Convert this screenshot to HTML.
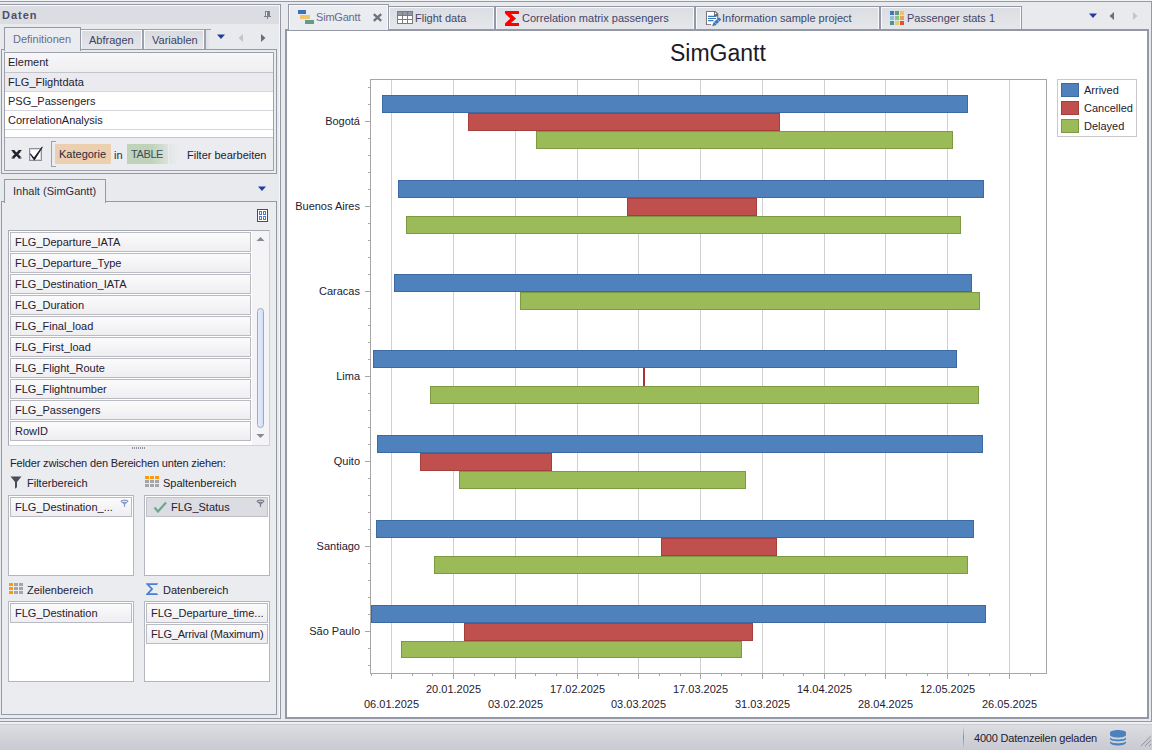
<!DOCTYPE html>
<html><head><meta charset="utf-8">
<style>
*{box-sizing:border-box;margin:0;padding:0}
html,body{width:1152px;height:750px;overflow:hidden}
body{position:relative;background:#e9eaee;font-family:"Liberation Sans",sans-serif;font-size:11px;color:#1f2030}
.a{position:absolute}
.t{position:absolute;white-space:nowrap;line-height:13px;height:13px}
.fi{position:absolute;height:20px;border:1px solid #b9bac2;background:linear-gradient(#fbfbfc,#eeeef1);}
.fi span{position:absolute;left:4px;top:3px;white-space:nowrap;line-height:13px}
.box{position:absolute;background:#fff;border:1px solid #b4b6be}
</style></head><body>
<!-- top line -->
<div class="a" style="left:0;top:0;width:1152px;height:1px;background:#f1f2f5"></div>
<div class="a" style="left:0;top:1px;width:1152px;height:1px;background:#9799a6"></div>
<!-- LEFT PANEL frame -->
<div class="a" style="left:0;top:4px;width:281px;height:715px;border-top:1px solid #9599a5;border-right:1px solid #9599a5;border-bottom:1px solid #9599a5"></div>
<div class="a" style="left:0;top:5px;width:280px;height:1px;background:#f7f8fa"></div>
<div class="a" style="left:279px;top:5px;width:1px;height:713px;background:#f7f8fa"></div>
<!-- header -->
<div class="a" style="left:0;top:6px;width:279px;height:18px;background:#dcdde2"></div>
<div class="t" style="left:2px;top:9px;font-weight:bold;font-size:11px;color:#4b5068;letter-spacing:1px">Daten</div>
<!-- pin -->
<div class="a" style="left:265px;top:11px;width:5px;height:5px;background:#7c7f8c"></div>
<div class="a" style="left:266px;top:12px;width:1px;height:4px;background:#eceef2"></div>
<div class="a" style="left:264px;top:16px;width:7px;height:1px;background:#7c7f8c"></div>
<div class="a" style="left:267px;top:17px;width:1px;height:2px;background:#7c7f8c"></div>
<!-- tabs row 1 -->
<div class="a" style="left:80px;top:29px;width:63px;height:21px;border:1px solid #9ea1ab;border-bottom:none;box-shadow:inset 1px 1px 0 #f8f9fb,inset -1px 0 0 #f8f9fb;background:linear-gradient(#d9dadf,#e6e7eb)"></div>
<div class="t" style="left:89px;top:34px;color:#3a4466">Abfragen</div>
<div class="a" style="left:143px;top:29px;width:62px;height:21px;border:1px solid #9ea1ab;border-bottom:none;box-shadow:inset 1px 1px 0 #f8f9fb,inset -1px 0 0 #f8f9fb;background:linear-gradient(#d9dadf,#e6e7eb)"></div>
<div class="t" style="left:152px;top:34px;color:#3a4466">Variablen</div>
<div class="a" style="left:205px;top:29px;width:6px;height:21px;border-left:1px solid #9ea1ab;border-top:1px solid #9ea1ab;background:linear-gradient(90deg,#dfe0e5,#e9eaee)"></div>
<!-- tab page 1 -->
<div class="a" style="left:1px;top:49px;width:276px;height:125px;border:1px solid #9599a5;background:#ebecf0"></div>
<!-- active tab Definitionen -->
<div class="a" style="left:4px;top:27px;width:77px;height:24px;border:1px solid #9599a5;border-bottom:none;background:#ebecf0"></div>
<div class="t" style="left:13px;top:33px;color:#6a6c88">Definitionen</div>
<!-- arrows -->
<svg class="a" style="left:216px;top:34px" width="10" height="6" viewBox="0 0 10 6"><path d="M1 0.5h8L5 5z" fill="#1f3d9e"/></svg>
<svg class="a" style="left:237px;top:33px" width="7" height="10" viewBox="0 0 7 10"><path d="M6 1v8L1.5 5z" fill="#c3c5cc"/></svg>
<svg class="a" style="left:260px;top:33px" width="7" height="10" viewBox="0 0 7 10"><path d="M1 1v8L5.5 5z" fill="#6b6e7a"/></svg>

<!-- grid -->
<div class="a" style="left:4px;top:52px;width:270px;height:119px;border:1px solid #9ea1ab;background:#fff"></div>
<div class="a" style="left:5px;top:53px;width:268px;height:19px;background:linear-gradient(#f7f7f9,#efeff2)"></div>
<div class="a" style="left:5px;top:72px;width:268px;height:1px;background:#c4c5cc"></div>
<div class="a" style="left:5px;top:73px;width:268px;height:18px;background:#ebebef"></div>
<div class="a" style="left:5px;top:91px;width:268px;height:1px;background:#d6d7dc"></div>
<div class="a" style="left:5px;top:110px;width:268px;height:1px;background:#d6d7dc"></div>
<div class="a" style="left:5px;top:129px;width:268px;height:1px;background:#d6d7dc"></div>
<div class="a" style="left:5px;top:137px;width:268px;height:1px;background:#c4c5cc"></div>
<div class="a" style="left:5px;top:138px;width:268px;height:32px;background:#ebecf0"></div>
<div class="t" style="left:8px;top:56px;color:#1f2030">Element</div>
<div class="t" style="left:8px;top:76px;color:#1f2030">FLG_Flightdata</div>
<div class="t" style="left:8px;top:95px;color:#1f2030">PSG_Passengers</div>
<div class="t" style="left:8px;top:114px;color:#1f2030">CorrelationAnalysis</div>
<!-- filter bar -->
<svg class="a" style="left:11px;top:150px" width="11" height="9" viewBox="0 0 11 9"><path d="M2 0.8L9 7.6M9 0.8L2 7.6" stroke="#1f2030" stroke-width="2.5"/><path d="M0.5 0.5h3M7.5 0.5h3M0.5 8h3M7.5 8h3" stroke="#1f2030" stroke-width="1"/></svg>
<div class="a" style="left:29px;top:148px;width:13px;height:13px;border:1px solid #8e919c;background:#fff;box-shadow:inset 0 0 0 1px #d9dae1"></div>
<svg class="a" style="left:28px;top:144px" width="16" height="18" viewBox="0 0 16 18"><path d="M2.5 10.2L6.3 15.8L14.2 3.2L6 14.3z" fill="#1f2030" stroke="#1f2030" stroke-width="1.1" stroke-linejoin="round"/></svg>
<div class="a" style="left:51px;top:141px;width:5px;height:26px;border:1px solid #9ea1ab;border-right:none"></div>
<div class="a" style="left:55px;top:144px;width:56px;height:20px;background:#ebcfae;border-radius:1px"></div>
<div class="t" style="left:59px;top:148px;color:#2a2a44">Kategorie</div>
<div class="t" style="left:114px;top:149px;color:#2a2a44">in</div>
<div class="a" style="left:127px;top:144px;width:41px;height:20px;background:linear-gradient(90deg,#bfd3bb 60%,#dbe3da)"></div>
<div class="t" style="left:131px;top:148px;color:#3f4d5e;letter-spacing:-0.4px">TABLE</div>
<div class="a" style="left:169px;top:144px;width:9px;height:20px;background:linear-gradient(90deg,#e3e6e6,#eaebee)"></div>
<div class="t" style="left:187px;top:149px;color:#1f2030">Filter bearbeiten</div>

<!-- tab 2 Inhalt -->
<div class="a" style="left:1px;top:201px;width:276px;height:514px;border:1px solid #9599a5;background:#ebecf0"></div>
<div class="a" style="left:4px;top:179px;width:102px;height:24px;border:1px solid #9599a5;border-bottom:none;background:#ebecf0"></div>
<div class="t" style="left:13px;top:185px;color:#2a2c44">Inhalt (SimGantt)</div>
<svg class="a" style="left:257px;top:186px" width="10" height="6" viewBox="0 0 10 6"><path d="M1 0.5h8L5 5z" fill="#1f3d9e"/></svg>
<!-- grid icon -->
<div class="a" style="left:257px;top:209px;width:11px;height:13px;border:1px solid #4a4d58;background:#fff"></div>
<div class="a" style="left:259px;top:211px;width:3px;height:4px;border:1px solid #4a7ed6"></div>
<div class="a" style="left:263px;top:211px;width:3px;height:4px;border:1px solid #4a7ed6"></div>
<div class="a" style="left:259px;top:216px;width:3px;height:4px;border:1px solid #4a7ed6"></div>
<div class="a" style="left:263px;top:216px;width:3px;height:4px;border:1px solid #4a7ed6"></div>
<!-- field list -->
<div class="a" style="left:8px;top:230px;width:262px;height:216px;border:1px solid #a9abb4;border-bottom-color:#d0d1d6;border-right-color:#d0d1d6;background:#f4f4f6"></div>
<div class="a" style="left:9px;top:231px;width:243px;height:214px;background:#fff"></div>
<div class="fi" style="left:10px;top:232px;width:241px"><span>FLG_Departure_IATA</span></div>
<div class="fi" style="left:10px;top:253px;width:241px"><span>FLG_Departure_Type</span></div>
<div class="fi" style="left:10px;top:274px;width:241px"><span>FLG_Destination_IATA</span></div>
<div class="fi" style="left:10px;top:295px;width:241px"><span>FLG_Duration</span></div>
<div class="fi" style="left:10px;top:316px;width:241px"><span>FLG_Final_load</span></div>
<div class="fi" style="left:10px;top:337px;width:241px"><span>FLG_First_load</span></div>
<div class="fi" style="left:10px;top:358px;width:241px"><span>FLG_Flight_Route</span></div>
<div class="fi" style="left:10px;top:379px;width:241px"><span>FLG_Flightnumber</span></div>
<div class="fi" style="left:10px;top:400px;width:241px"><span>FLG_Passengers</span></div>
<div class="fi" style="left:10px;top:421px;width:241px"><span>RowID</span></div>
<!-- scrollbar -->
<svg class="a" style="left:256px;top:236px" width="9" height="6" viewBox="0 0 9 6"><path d="M0.5 5h8L4.5 1z" fill="#868995"/></svg>
<div class="a" style="left:257px;top:308px;width:7px;height:120px;border:1px solid #a6a9b4;border-radius:4px;background:linear-gradient(90deg,#e6ecfb,#d3def8)"></div>
<svg class="a" style="left:256px;top:433px" width="9" height="6" viewBox="0 0 9 6"><path d="M0.5 1h8L4.5 5z" fill="#868995"/></svg>
<!-- splitter dots -->
<div class="a" style="left:132px;top:447px;width:14px;height:2px;background:repeating-linear-gradient(90deg,#8e919c 0 1px,transparent 1px 2px)"></div>
<div class="t" style="left:10px;top:457px;color:#1f2030;letter-spacing:-0.16px">Felder zwischen den Bereichen unten ziehen:</div>
<!-- Filterbereich -->
<svg class="a" style="left:10px;top:476px" width="12" height="13" viewBox="0 0 12 13"><path d="M0.5 0.5h11L7 6v5.2L5 12.8V6z" fill="#4a4d58"/></svg>
<div class="t" style="left:27px;top:477px;color:#1f2030">Filterbereich</div>
<div class="box" style="left:8px;top:495px;width:126px;height:81px"></div>
<div class="fi" style="left:10px;top:497px;width:122px"><span>FLG_Destination_...</span></div>
<svg class="a" style="left:120px;top:499px" width="9" height="10" viewBox="0 0 9 10"><ellipse cx="4.5" cy="2.2" rx="3.3" ry="1.1" fill="none" stroke="#8a9ccb" stroke-width="1.1"/><path d="M1.5 3L7.5 3L5.1 5.6H3.9z" fill="#8a9ccb"/><rect x="3.9" y="5" width="1.2" height="3" fill="#8a9ccb"/></svg>
<!-- Spaltenbereich -->
<svg class="a" style="left:145px;top:476px" width="15" height="12" viewBox="0 0 15 12">
<rect x="0" y="0" width="4" height="3" fill="#fd9a0c"/><rect x="5" y="0" width="4" height="3" fill="#fd9a0c"/><rect x="10" y="0" width="4" height="3" fill="#fd9a0c"/>
<rect x="0" y="4" width="4" height="3" fill="#a5a5a7"/><rect x="5" y="4" width="4" height="3" fill="#a5a5a7"/><rect x="10" y="4" width="4" height="3" fill="#a5a5a7"/>
<rect x="0" y="8" width="4" height="3" fill="#a5a5a7"/><rect x="5" y="8" width="4" height="3" fill="#a5a5a7"/><rect x="10" y="8" width="4" height="3" fill="#a5a5a7"/></svg>
<div class="t" style="left:163px;top:477px;color:#1f2030">Spaltenbereich</div>
<div class="box" style="left:144px;top:495px;width:126px;height:81px"></div>
<div class="fi" style="left:146px;top:497px;width:122px;background:#dcdde2;border-color:#c0c1c8"><span style="left:24px">FLG_Status</span></div>
<svg class="a" style="left:153px;top:501px" width="15" height="12" viewBox="0 0 15 12"><path d="M1.5 6.5l3.5 4l8-9" fill="none" stroke="#68a891" stroke-width="2.2"/></svg>
<svg class="a" style="left:256px;top:499px" width="9" height="10" viewBox="0 0 9 10"><ellipse cx="4.5" cy="2.2" rx="3.3" ry="1.1" fill="none" stroke="#7d808a" stroke-width="1.1"/><path d="M1.5 3L7.5 3L5.1 5.6H3.9z" fill="#7d808a"/><rect x="3.9" y="5" width="1.2" height="3" fill="#7d808a"/></svg>
<!-- Zeilenbereich -->
<svg class="a" style="left:9px;top:583px" width="15" height="12" viewBox="0 0 15 12">
<rect x="0" y="0" width="4" height="3" fill="#fd9a0c"/><rect x="5" y="0" width="4" height="3" fill="#a5a5a7"/><rect x="10" y="0" width="4" height="3" fill="#a5a5a7"/>
<rect x="0" y="4" width="4" height="3" fill="#fd9a0c"/><rect x="5" y="4" width="4" height="3" fill="#a5a5a7"/><rect x="10" y="4" width="4" height="3" fill="#a5a5a7"/>
<rect x="0" y="8" width="4" height="3" fill="#fd9a0c"/><rect x="5" y="8" width="4" height="3" fill="#a5a5a7"/><rect x="10" y="8" width="4" height="3" fill="#a5a5a7"/></svg>
<div class="t" style="left:27px;top:584px;color:#1f2030">Zeilenbereich</div>
<div class="box" style="left:8px;top:601px;width:126px;height:81px"></div>
<div class="fi" style="left:10px;top:603px;width:122px"><span>FLG_Destination</span></div>
<!-- Datenbereich -->
<svg class="a" style="left:146px;top:583px" width="13" height="13" viewBox="0 0 13 13"><path d="M0 0.2H12.3L10.9 1.9H3.4L7.2 6.1L3.4 10.3H10.9L12.3 12H0V11.2L4.9 6.1L0 1z" fill="#4a7fd4"/></svg>
<div class="t" style="left:163px;top:584px;color:#1f2030">Datenbereich</div>
<div class="box" style="left:144px;top:601px;width:126px;height:81px"></div>
<div class="fi" style="left:146px;top:603px;width:122px"><span>FLG_Departure_time...</span></div>
<div class="fi" style="left:146px;top:624px;width:122px"><span style="letter-spacing:-0.2px">FLG_Arrival (Maximum)</span></div>
<!-- DOC TABS -->
<div class="a" style="left:388px;top:6px;width:107px;height:24px;box-shadow:inset 1px 1px 0 #f8f9fb,inset -1px 0 0 #f8f9fb;border:1px solid #9599a5;border-bottom:none;background:linear-gradient(#dcdde2,#e6e7eb)"></div>
<div class="a" style="left:495px;top:6px;width:200px;height:24px;box-shadow:inset 1px 1px 0 #f8f9fb,inset -1px 0 0 #f8f9fb;border:1px solid #9599a5;border-bottom:none;background:linear-gradient(#dcdde2,#e6e7eb)"></div>
<div class="a" style="left:695px;top:6px;width:185px;height:24px;box-shadow:inset 1px 1px 0 #f8f9fb,inset -1px 0 0 #f8f9fb;border:1px solid #9599a5;border-bottom:none;background:linear-gradient(#dcdde2,#e6e7eb)"></div>
<div class="a" style="left:880px;top:6px;width:142px;height:24px;box-shadow:inset 1px 1px 0 #f8f9fb,inset -1px 0 0 #f8f9fb;border:1px solid #9599a5;border-bottom:none;background:linear-gradient(#dcdde2,#e6e7eb)"></div>
<!-- frame -->
<div class="a" style="left:285px;top:29px;width:864px;height:690px;border:2px solid #9599a5;background:#fff"></div>
<!-- active tab -->
<div class="a" style="left:288px;top:4px;width:101px;height:26px;border:1px solid #9599a5;border-bottom:none;background:#ebecf0;box-shadow:inset 1px 1px 0 #f8f9fb,inset -1px 0 0 #f8f9fb;"></div>
<div class="a" style="left:289px;top:29px;width:99px;height:1px;background:#ebecf0"></div>
<!-- gantt icon -->
<div class="a" style="left:298px;top:10px;width:8px;height:4px;background:#3a74b8"></div>
<div class="a" style="left:300px;top:15px;width:10px;height:4px;background:#f0c46e"></div>
<div class="a" style="left:305px;top:20px;width:9px;height:4px;background:#5e9e88"></div>
<div class="t" style="left:316px;top:11px;color:#646a8a;letter-spacing:-0.2px">SimGantt</div>
<svg class="a" style="left:372px;top:13px" width="11" height="9" viewBox="0 0 11 9"><path d="M1.8 1.2l7.4 6.6M9.2 1.2l-7.4 6.6" stroke="#6e717c" stroke-width="2.3"/></svg>
<!-- flight data icon -->
<div class="a" style="left:397px;top:11px;width:16px;height:13px;background:#7b7b7b"></div>
<div class="a" style="left:398px;top:12px;width:4px;height:3px;background:#8f9aa8"></div>
<div class="a" style="left:403px;top:12px;width:4px;height:3px;background:#8f9aa8"></div>
<div class="a" style="left:408px;top:12px;width:4px;height:3px;background:#8f9aa8"></div>
<div class="a" style="left:398px;top:16px;width:4px;height:3px;background:#fff"></div>
<div class="a" style="left:403px;top:16px;width:4px;height:3px;background:#fff"></div>
<div class="a" style="left:408px;top:16px;width:4px;height:3px;background:#fff"></div>
<div class="a" style="left:398px;top:20px;width:4px;height:3px;background:#fff"></div>
<div class="a" style="left:403px;top:20px;width:4px;height:3px;background:#fff"></div>
<div class="a" style="left:408px;top:20px;width:4px;height:3px;background:#fff"></div>
<div class="t" style="left:415px;top:12px;color:#3f4668">Flight data</div>
<!-- sigma red -->
<svg class="a" style="left:504px;top:10px" width="16" height="17" viewBox="0 0 16 17"><path d="M1 1h14v3H7L12 8.5L7 13H15v3H1v-2.5L6.3 8.5L1 3.5z" fill="#ff0000"/></svg>
<div class="t" style="left:522px;top:12px;color:#3f4668">Correlation matrix passengers</div>
<!-- doc icon -->
<svg class="a" style="left:705px;top:10px" width="17" height="17" viewBox="0 0 17 17">
<path d="M1.5 1.5H9.5V6H12.5V9.5M6 14.5H1.5V1.5" fill="#fff" stroke="#6b6b6b" stroke-width="1.1"/>
<rect x="1.9" y="1.9" width="7.3" height="12.3" fill="#fff"/><rect x="9" y="5.9" width="3.2" height="5" fill="#fff"/>
<path d="M9.2 1.2h1.5l2.6 2.6v2.6h-4.1z" fill="#6b6b6b"/><circle cx="10.6" cy="3.4" r="0.8" fill="#fff"/>
<path d="M3 6.4h8M3 8.5h8M3 10.6h5.5" stroke="#3a78c0" stroke-width="1.1"/>
<path d="M8.3 12.8l5.6-5.6l2.4 2.4l-5.6 5.6l-3.4 1z" fill="#3a78c0"/>
<path d="M9.6 12.3l2.3 2.3M12.3 9.6l2.3 2.3" stroke="#cfe0f3" stroke-width="0.7"/>
</svg>
<div class="t" style="left:722px;top:12px;color:#3f4668">Information sample project</div>
<!-- colour grid -->
<svg class="a" style="left:890px;top:11px" width="15" height="15" viewBox="0 0 15 15">
<rect x="0" y="0" width="4" height="4" fill="#3d78b8"/><rect x="5" y="0" width="4" height="4" fill="#5e9c80"/><rect x="10" y="0" width="4" height="4" fill="#f1c062"/>
<rect x="0" y="5" width="4" height="4" fill="#88c3dc"/><rect x="5" y="5" width="4" height="4" fill="#88c87a"/><rect x="10" y="5" width="4" height="4" fill="#eba052"/>
<rect x="0" y="10" width="4" height="4" fill="#4f9690"/><rect x="5" y="10" width="4" height="4" fill="#d8d27a"/><rect x="10" y="10" width="4" height="4" fill="#e0532f"/></svg>
<div class="t" style="left:907px;top:12px;color:#3f4668">Passenger stats 1</div>
<!-- right arrows -->
<svg class="a" style="left:1088px;top:13px" width="10" height="6" viewBox="0 0 10 6"><path d="M1 0.5h8L5 5z" fill="#1f3d9e"/></svg>
<svg class="a" style="left:1108px;top:11px" width="7" height="10" viewBox="0 0 7 10"><path d="M6 1v8L1.5 5z" fill="#6b6e7a"/></svg>
<svg class="a" style="left:1132px;top:11px" width="7" height="10" viewBox="0 0 7 10"><path d="M1 1v8L5.5 5z" fill="#c3c5cc"/></svg>
<div class="a" style="left:1151px;top:1px;width:1px;height:720px;background:#9599a5"></div>

<!-- STATUS BAR -->
<div class="a" style="left:0;top:721px;width:1152px;height:1px;background:#9599a5"></div>
<div class="a" style="left:0;top:722px;width:1152px;height:2px;background:#eef0f3"></div>
<div class="a" style="left:0;top:724px;width:1152px;height:1px;background:#cbccd2"></div><div class="a" style="left:0;top:725px;width:1152px;height:25px;background:linear-gradient(#dcdde1,#c9cad2)"></div>
<div class="a" style="left:963px;top:726px;width:1px;height:23px;background:linear-gradient(rgba(140,143,152,0),#8c8f98 50%,rgba(140,143,152,0))"></div>
<div class="t" style="left:974px;top:732px;color:#1f2030;letter-spacing:-0.2px">4000 Datenzeilen geladen</div>
<svg class="a" style="left:1110px;top:730px" width="16" height="16" viewBox="0 0 16 16"><path d="M0 2.8C0 -0.9 16 -0.9 16 2.8V4.8C16 8.5 0 8.5 0 4.8Z" fill="#4a82bf"/><path d="M0 7.3C0 10.3 16 10.3 16 7.3V9.1C16 12.1 0 12.1 0 9.1Z" fill="#4a82bf"/><path d="M0 11C0 14 16 14 16 11V12.6C16 16.5 0 16.5 0 12.6Z" fill="#4a82bf"/></svg>
<svg class="a" style="left:1140px;top:734px" width="12" height="14" viewBox="0 0 12 14"><path d="M1 12L11 2M5 12L11 6M9 12L11 10" stroke="#8a8d97" stroke-width="1.1" stroke-dasharray="1 0.5"/></svg>
<div class="a" style="left:670px;top:40px;font-size:23px;line-height:27px;white-space:nowrap;color:#1a1a28">SimGantt</div>
<div class="a" style="left:391px;top:80px;width:1px;height:599px;background:#d0d0d0"></div>
<div class="a" style="left:453px;top:80px;width:1px;height:599px;background:#d0d0d0"></div>
<div class="a" style="left:515px;top:80px;width:1px;height:599px;background:#d0d0d0"></div>
<div class="a" style="left:577px;top:80px;width:1px;height:599px;background:#d0d0d0"></div>
<div class="a" style="left:638px;top:80px;width:1px;height:599px;background:#d0d0d0"></div>
<div class="a" style="left:700px;top:80px;width:1px;height:599px;background:#d0d0d0"></div>
<div class="a" style="left:762px;top:80px;width:1px;height:599px;background:#d0d0d0"></div>
<div class="a" style="left:824px;top:80px;width:1px;height:599px;background:#d0d0d0"></div>
<div class="a" style="left:885px;top:80px;width:1px;height:599px;background:#d0d0d0"></div>
<div class="a" style="left:947px;top:80px;width:1px;height:599px;background:#d0d0d0"></div>
<div class="a" style="left:1009px;top:80px;width:1px;height:599px;background:#d0d0d0"></div>
<div class="a" style="left:370px;top:79px;width:677px;height:1px;background:#a6a6a6"></div>
<div class="a" style="left:1046px;top:79px;width:1px;height:595px;background:#a6a6a6"></div>
<div class="a" style="left:370px;top:79px;width:1px;height:595px;background:#a6a6a6"></div>
<div class="a" style="left:370px;top:673px;width:677px;height:1px;background:#a6a6a6"></div>
<div class="a" style="left:368px;top:87px;width:2px;height:1px;background:#a6a6a6"></div>
<div class="a" style="left:368px;top:104px;width:2px;height:1px;background:#a6a6a6"></div>
<div class="a" style="left:365px;top:121px;width:5px;height:1px;background:#a6a6a6"></div>
<div class="a" style="left:368px;top:138px;width:2px;height:1px;background:#a6a6a6"></div>
<div class="a" style="left:368px;top:155px;width:2px;height:1px;background:#a6a6a6"></div>
<div class="a" style="left:368px;top:172px;width:2px;height:1px;background:#a6a6a6"></div>
<div class="a" style="left:368px;top:189px;width:2px;height:1px;background:#a6a6a6"></div>
<div class="a" style="left:365px;top:206px;width:5px;height:1px;background:#a6a6a6"></div>
<div class="a" style="left:368px;top:223px;width:2px;height:1px;background:#a6a6a6"></div>
<div class="a" style="left:368px;top:240px;width:2px;height:1px;background:#a6a6a6"></div>
<div class="a" style="left:368px;top:257px;width:2px;height:1px;background:#a6a6a6"></div>
<div class="a" style="left:368px;top:274px;width:2px;height:1px;background:#a6a6a6"></div>
<div class="a" style="left:365px;top:291px;width:5px;height:1px;background:#a6a6a6"></div>
<div class="a" style="left:368px;top:308px;width:2px;height:1px;background:#a6a6a6"></div>
<div class="a" style="left:368px;top:325px;width:2px;height:1px;background:#a6a6a6"></div>
<div class="a" style="left:368px;top:342px;width:2px;height:1px;background:#a6a6a6"></div>
<div class="a" style="left:368px;top:359px;width:2px;height:1px;background:#a6a6a6"></div>
<div class="a" style="left:365px;top:376px;width:5px;height:1px;background:#a6a6a6"></div>
<div class="a" style="left:368px;top:393px;width:2px;height:1px;background:#a6a6a6"></div>
<div class="a" style="left:368px;top:410px;width:2px;height:1px;background:#a6a6a6"></div>
<div class="a" style="left:368px;top:427px;width:2px;height:1px;background:#a6a6a6"></div>
<div class="a" style="left:368px;top:444px;width:2px;height:1px;background:#a6a6a6"></div>
<div class="a" style="left:365px;top:461px;width:5px;height:1px;background:#a6a6a6"></div>
<div class="a" style="left:368px;top:478px;width:2px;height:1px;background:#a6a6a6"></div>
<div class="a" style="left:368px;top:495px;width:2px;height:1px;background:#a6a6a6"></div>
<div class="a" style="left:368px;top:512px;width:2px;height:1px;background:#a6a6a6"></div>
<div class="a" style="left:368px;top:529px;width:2px;height:1px;background:#a6a6a6"></div>
<div class="a" style="left:365px;top:546px;width:5px;height:1px;background:#a6a6a6"></div>
<div class="a" style="left:368px;top:563px;width:2px;height:1px;background:#a6a6a6"></div>
<div class="a" style="left:368px;top:580px;width:2px;height:1px;background:#a6a6a6"></div>
<div class="a" style="left:368px;top:597px;width:2px;height:1px;background:#a6a6a6"></div>
<div class="a" style="left:368px;top:614px;width:2px;height:1px;background:#a6a6a6"></div>
<div class="a" style="left:365px;top:631px;width:5px;height:1px;background:#a6a6a6"></div>
<div class="a" style="left:368px;top:648px;width:2px;height:1px;background:#a6a6a6"></div>
<div class="a" style="left:368px;top:665px;width:2px;height:1px;background:#a6a6a6"></div>
<div class="a" style="left:371px;top:674px;width:1px;height:2px;background:#a6a6a6"></div>
<div class="a" style="left:391px;top:674px;width:1px;height:5px;background:#a6a6a6"></div>
<div class="a" style="left:412px;top:674px;width:1px;height:2px;background:#a6a6a6"></div>
<div class="a" style="left:432px;top:674px;width:1px;height:2px;background:#a6a6a6"></div>
<div class="a" style="left:453px;top:674px;width:1px;height:5px;background:#a6a6a6"></div>
<div class="a" style="left:474px;top:674px;width:1px;height:2px;background:#a6a6a6"></div>
<div class="a" style="left:494px;top:674px;width:1px;height:2px;background:#a6a6a6"></div>
<div class="a" style="left:515px;top:674px;width:1px;height:5px;background:#a6a6a6"></div>
<div class="a" style="left:535px;top:674px;width:1px;height:2px;background:#a6a6a6"></div>
<div class="a" style="left:556px;top:674px;width:1px;height:2px;background:#a6a6a6"></div>
<div class="a" style="left:577px;top:674px;width:1px;height:5px;background:#a6a6a6"></div>
<div class="a" style="left:597px;top:674px;width:1px;height:2px;background:#a6a6a6"></div>
<div class="a" style="left:618px;top:674px;width:1px;height:2px;background:#a6a6a6"></div>
<div class="a" style="left:638px;top:674px;width:1px;height:5px;background:#a6a6a6"></div>
<div class="a" style="left:659px;top:674px;width:1px;height:2px;background:#a6a6a6"></div>
<div class="a" style="left:680px;top:674px;width:1px;height:2px;background:#a6a6a6"></div>
<div class="a" style="left:700px;top:674px;width:1px;height:5px;background:#a6a6a6"></div>
<div class="a" style="left:721px;top:674px;width:1px;height:2px;background:#a6a6a6"></div>
<div class="a" style="left:741px;top:674px;width:1px;height:2px;background:#a6a6a6"></div>
<div class="a" style="left:762px;top:674px;width:1px;height:5px;background:#a6a6a6"></div>
<div class="a" style="left:783px;top:674px;width:1px;height:2px;background:#a6a6a6"></div>
<div class="a" style="left:803px;top:674px;width:1px;height:2px;background:#a6a6a6"></div>
<div class="a" style="left:824px;top:674px;width:1px;height:5px;background:#a6a6a6"></div>
<div class="a" style="left:844px;top:674px;width:1px;height:2px;background:#a6a6a6"></div>
<div class="a" style="left:865px;top:674px;width:1px;height:2px;background:#a6a6a6"></div>
<div class="a" style="left:885px;top:674px;width:1px;height:5px;background:#a6a6a6"></div>
<div class="a" style="left:906px;top:674px;width:1px;height:2px;background:#a6a6a6"></div>
<div class="a" style="left:927px;top:674px;width:1px;height:2px;background:#a6a6a6"></div>
<div class="a" style="left:947px;top:674px;width:1px;height:5px;background:#a6a6a6"></div>
<div class="a" style="left:968px;top:674px;width:1px;height:2px;background:#a6a6a6"></div>
<div class="a" style="left:989px;top:674px;width:1px;height:2px;background:#a6a6a6"></div>
<div class="a" style="left:1009px;top:674px;width:1px;height:5px;background:#a6a6a6"></div>
<div class="a" style="left:1030px;top:674px;width:1px;height:2px;background:#a6a6a6"></div>
<div class="t" style="left:351px;top:698px;width:81px;text-align:center;color:#1f2030">06.01.2025</div>
<div class="t" style="left:413px;top:683px;width:81px;text-align:center;color:#1f2030">20.01.2025</div>
<div class="t" style="left:475px;top:698px;width:81px;text-align:center;color:#1f2030">03.02.2025</div>
<div class="t" style="left:537px;top:683px;width:81px;text-align:center;color:#1f2030">17.02.2025</div>
<div class="t" style="left:598px;top:698px;width:81px;text-align:center;color:#1f2030">03.03.2025</div>
<div class="t" style="left:660px;top:683px;width:81px;text-align:center;color:#1f2030">17.03.2025</div>
<div class="t" style="left:722px;top:698px;width:81px;text-align:center;color:#1f2030">31.03.2025</div>
<div class="t" style="left:784px;top:683px;width:81px;text-align:center;color:#1f2030">14.04.2025</div>
<div class="t" style="left:845px;top:698px;width:81px;text-align:center;color:#1f2030">28.04.2025</div>
<div class="t" style="left:907px;top:683px;width:81px;text-align:center;color:#1f2030">12.05.2025</div>
<div class="t" style="left:969px;top:698px;width:81px;text-align:center;color:#1f2030">26.05.2025</div>
<div class="t" style="left:260px;top:115px;width:100px;text-align:right;color:#1f2030">Bogotá</div>
<div class="t" style="left:260px;top:200px;width:100px;text-align:right;color:#1f2030">Buenos Aires</div>
<div class="t" style="left:260px;top:285px;width:100px;text-align:right;color:#1f2030">Caracas</div>
<div class="t" style="left:260px;top:370px;width:100px;text-align:right;color:#1f2030">Lima</div>
<div class="t" style="left:260px;top:455px;width:100px;text-align:right;color:#1f2030">Quito</div>
<div class="t" style="left:260px;top:540px;width:100px;text-align:right;color:#1f2030">Santiago</div>
<div class="t" style="left:260px;top:625px;width:100px;text-align:right;color:#1f2030">São Paulo</div>
<div class="a" style="left:382px;top:95px;width:586px;height:18px;background:#4f81bd;border:1px solid #3d6aa3"></div>
<div class="a" style="left:468px;top:113px;width:312px;height:18px;background:#c0504d;border:1px solid #a43f3c"></div>
<div class="a" style="left:536px;top:131px;width:417px;height:18px;background:#9bbb59;border:1px solid #7d9a42"></div>
<div class="a" style="left:398px;top:180px;width:586px;height:18px;background:#4f81bd;border:1px solid #3d6aa3"></div>
<div class="a" style="left:627px;top:198px;width:130px;height:18px;background:#c0504d;border:1px solid #a43f3c"></div>
<div class="a" style="left:406px;top:216px;width:555px;height:18px;background:#9bbb59;border:1px solid #7d9a42"></div>
<div class="a" style="left:394px;top:274px;width:578px;height:18px;background:#4f81bd;border:1px solid #3d6aa3"></div>
<div class="a" style="left:520px;top:292px;width:460px;height:18px;background:#9bbb59;border:1px solid #7d9a42"></div>
<div class="a" style="left:373px;top:350px;width:584px;height:18px;background:#4f81bd;border:1px solid #3d6aa3"></div>
<div class="a" style="left:643px;top:368px;width:2px;height:18px;background:#a83434"></div>
<div class="a" style="left:430px;top:386px;width:549px;height:18px;background:#9bbb59;border:1px solid #7d9a42"></div>
<div class="a" style="left:377px;top:435px;width:606px;height:18px;background:#4f81bd;border:1px solid #3d6aa3"></div>
<div class="a" style="left:420px;top:453px;width:132px;height:18px;background:#c0504d;border:1px solid #a43f3c"></div>
<div class="a" style="left:459px;top:471px;width:287px;height:18px;background:#9bbb59;border:1px solid #7d9a42"></div>
<div class="a" style="left:376px;top:520px;width:598px;height:18px;background:#4f81bd;border:1px solid #3d6aa3"></div>
<div class="a" style="left:661px;top:538px;width:116px;height:18px;background:#c0504d;border:1px solid #a43f3c"></div>
<div class="a" style="left:434px;top:556px;width:534px;height:18px;background:#9bbb59;border:1px solid #7d9a42"></div>
<div class="a" style="left:371px;top:605px;width:615px;height:18px;background:#4f81bd;border:1px solid #3d6aa3"></div>
<div class="a" style="left:464px;top:623px;width:289px;height:18px;background:#c0504d;border:1px solid #a43f3c"></div>
<div class="a" style="left:401px;top:641px;width:341px;height:17px;background:#9bbb59;border:1px solid #7d9a42"></div>
<div class="a" style="left:1057px;top:79px;width:80px;height:58px;border:1px solid #c9c9c9;background:#fff"></div>
<div class="a" style="left:1061px;top:83px;width:18px;height:14px;background:#4f81bd;border:1px solid #3d6aa3"></div>
<div class="t" style="left:1084px;top:84px;color:#1f2030">Arrived</div>
<div class="a" style="left:1061px;top:101px;width:18px;height:14px;background:#c0504d;border:1px solid #a43f3c"></div>
<div class="t" style="left:1084px;top:102px;color:#1f2030">Cancelled</div>
<div class="a" style="left:1061px;top:119px;width:18px;height:14px;background:#9bbb59;border:1px solid #7d9a42"></div>
<div class="t" style="left:1084px;top:120px;color:#1f2030">Delayed</div></body></html>
